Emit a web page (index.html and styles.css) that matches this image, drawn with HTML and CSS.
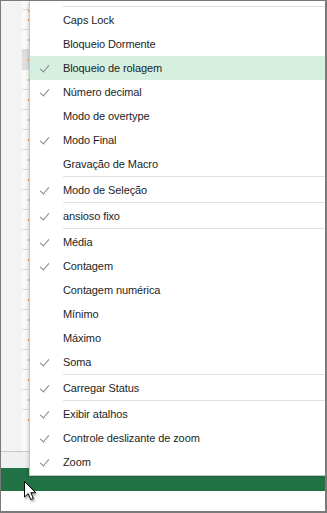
FILE: index.html
```html
<!DOCTYPE html>
<html lang="pt">
<head>
  <meta charset="UTF-8">
  <title>Barra de status</title>
  <link rel="stylesheet" href="styles.css">
</head>
<body>
  <div class="frame">
    <div class="sheet">
      <div class="grid">
        <div class="cells">
          <div class="cell"></div><div class="cell"></div><div class="cell"></div>
          <div class="cell active"></div><div class="cell"></div><div class="cell"></div>
          <div class="cell"></div><div class="cell"></div><div class="cell"></div>
          <div class="cell"></div><div class="cell"></div><div class="cell"></div>
          <div class="cell"></div><div class="cell"></div><div class="cell"></div>
          <div class="cell"></div><div class="cell"></div><div class="cell"></div>
          <div class="cell"></div><div class="cell"></div><div class="cell"></div>
          <div class="cell"></div>
        </div>
      </div>
      <div class="tabs"></div>
    </div>
    <div class="statusbar"></div>
    <div class="footer"></div>

    <div class="menu">
      <div class="sep"></div>
      <div class="item"><span class="check"></span>Caps Lock</div>
      <div class="item"><span class="check"></span>Bloqueio Dormente</div>
      <div class="item hover"><span class="check on"></span>Bloqueio de rolagem</div>
      <div class="item"><span class="check on"></span>Número decimal</div>
      <div class="item"><span class="check"></span>Modo de overtype</div>
      <div class="item"><span class="check on"></span>Modo Final</div>
      <div class="item"><span class="check"></span>Gravação de Macro</div>
      <div class="sep"></div>
      <div class="item"><span class="check on"></span>Modo de Seleção</div>
      <div class="sep"></div>
      <div class="item"><span class="check on"></span>ansioso fixo</div>
      <div class="sep"></div>
      <div class="item"><span class="check on"></span>Média</div>
      <div class="item"><span class="check on"></span>Contagem</div>
      <div class="item"><span class="check"></span>Contagem numérica</div>
      <div class="item"><span class="check"></span>Mínimo</div>
      <div class="item"><span class="check"></span>Máximo</div>
      <div class="item"><span class="check on"></span>Soma</div>
      <div class="sep"></div>
      <div class="item"><span class="check on"></span>Carregar Status</div>
      <div class="sep"></div>
      <div class="item"><span class="check on"></span>Exibir atalhos</div>
      <div class="item"><span class="check on"></span>Controle deslizante de zoom</div>
      <div class="item"><span class="check on"></span>Zoom</div>
    </div>

    <svg class="pointer" width="14" height="22" viewBox="0 0 14 22">
      <path d="M1.5 1.5 L1.5 17 L5.2 13.6 L7.8 19.6 L10.4 18.5 L7.9 12.7 L12.8 12.7 Z" fill="#fff" stroke="#000" stroke-width="1" stroke-linejoin="miter"/>
    </svg>
  </div>
</body>
</html>
```

FILE: styles.css
```css
body {
  margin: 0;
  font-family: "Segoe UI", "Liberation Sans", Arial, sans-serif;
  background: #fff;
}

.frame {
  position: relative;
  box-sizing: border-box;
  width: 327px;
  height: 513px;
  border-top: 1px solid #7a7a7a;
  border-left: 1px solid #7a7a7a;
  border-right: 2px solid #7a7a7a;
  border-bottom: 2px solid #7a7a7a;
  display: flex;
  flex-direction: column;
  overflow: hidden;
}

.sheet {
  height: 467px;
  display: flex;
  flex-direction: column;
  background: #f3f3f3;
}

.grid {
  height: 450px;
  display: flex;
  justify-content: flex-end;
  border-bottom: 1px solid #c8c8c8;
  padding-right: 296px;
}

.cells {
  width: 7px;
  background: #fafafa;
  display: flex;
  flex-direction: column;
}

.cell {
  height: 19px;
  border-top: 1px solid #dcdcdc;
  flex-shrink: 0;
  position: relative;
}

.cell::after {
  content: "";
  position: absolute;
  right: 0;
  top: 9px;
  width: 1px;
  height: 2px;
  background: #e8a860;
}

.cell:first-child {
  height: 8px;
  border-top: none;
}

.cell.active {
  background: #dedede;
}

.tabs {
  flex: 1;
  background: #f0f0f0;
}

.statusbar {
  height: 23px;
  background: #217346;
}

.footer {
  flex: 1;
  background: #fff;
}

.menu {
  position: absolute;
  top: 0;
  left: 28px;
  right: 0;
  box-sizing: border-box;
  height: 475px;
  padding-top: 5px;
  background: #fff;
  border-left: 1px solid #c6c6c6;
  border-bottom: 1px solid #c6c6c6;
  box-shadow: -1px 1px 3px rgba(0, 0, 0, 0.15);
}

.sep {
  height: 1px;
  margin: 0 0 1px 33px;
  background: #e1e1e1;
}

.item {
  height: 24px;
  display: flex;
  align-items: center;
  font-size: 11px;
  letter-spacing: -0.1px;
  color: #1e1e1e;
}

.item.hover {
  background: #d5efe0;
}

.check {
  width: 33px;
  height: 24px;
  flex-shrink: 0;
  position: relative;
}

.check.on::after {
  content: "";
  position: absolute;
  left: 12px;
  top: 7px;
  width: 4px;
  height: 8px;
  border-right: 1.5px solid #858585;
  border-bottom: 1.5px solid #858585;
  transform: rotate(40deg);
}

.pointer {
  position: absolute;
  left: 22px;
  top: 479px;
  filter: drop-shadow(1px 2px 1px rgba(0, 0, 0, 0.35));
}
```
